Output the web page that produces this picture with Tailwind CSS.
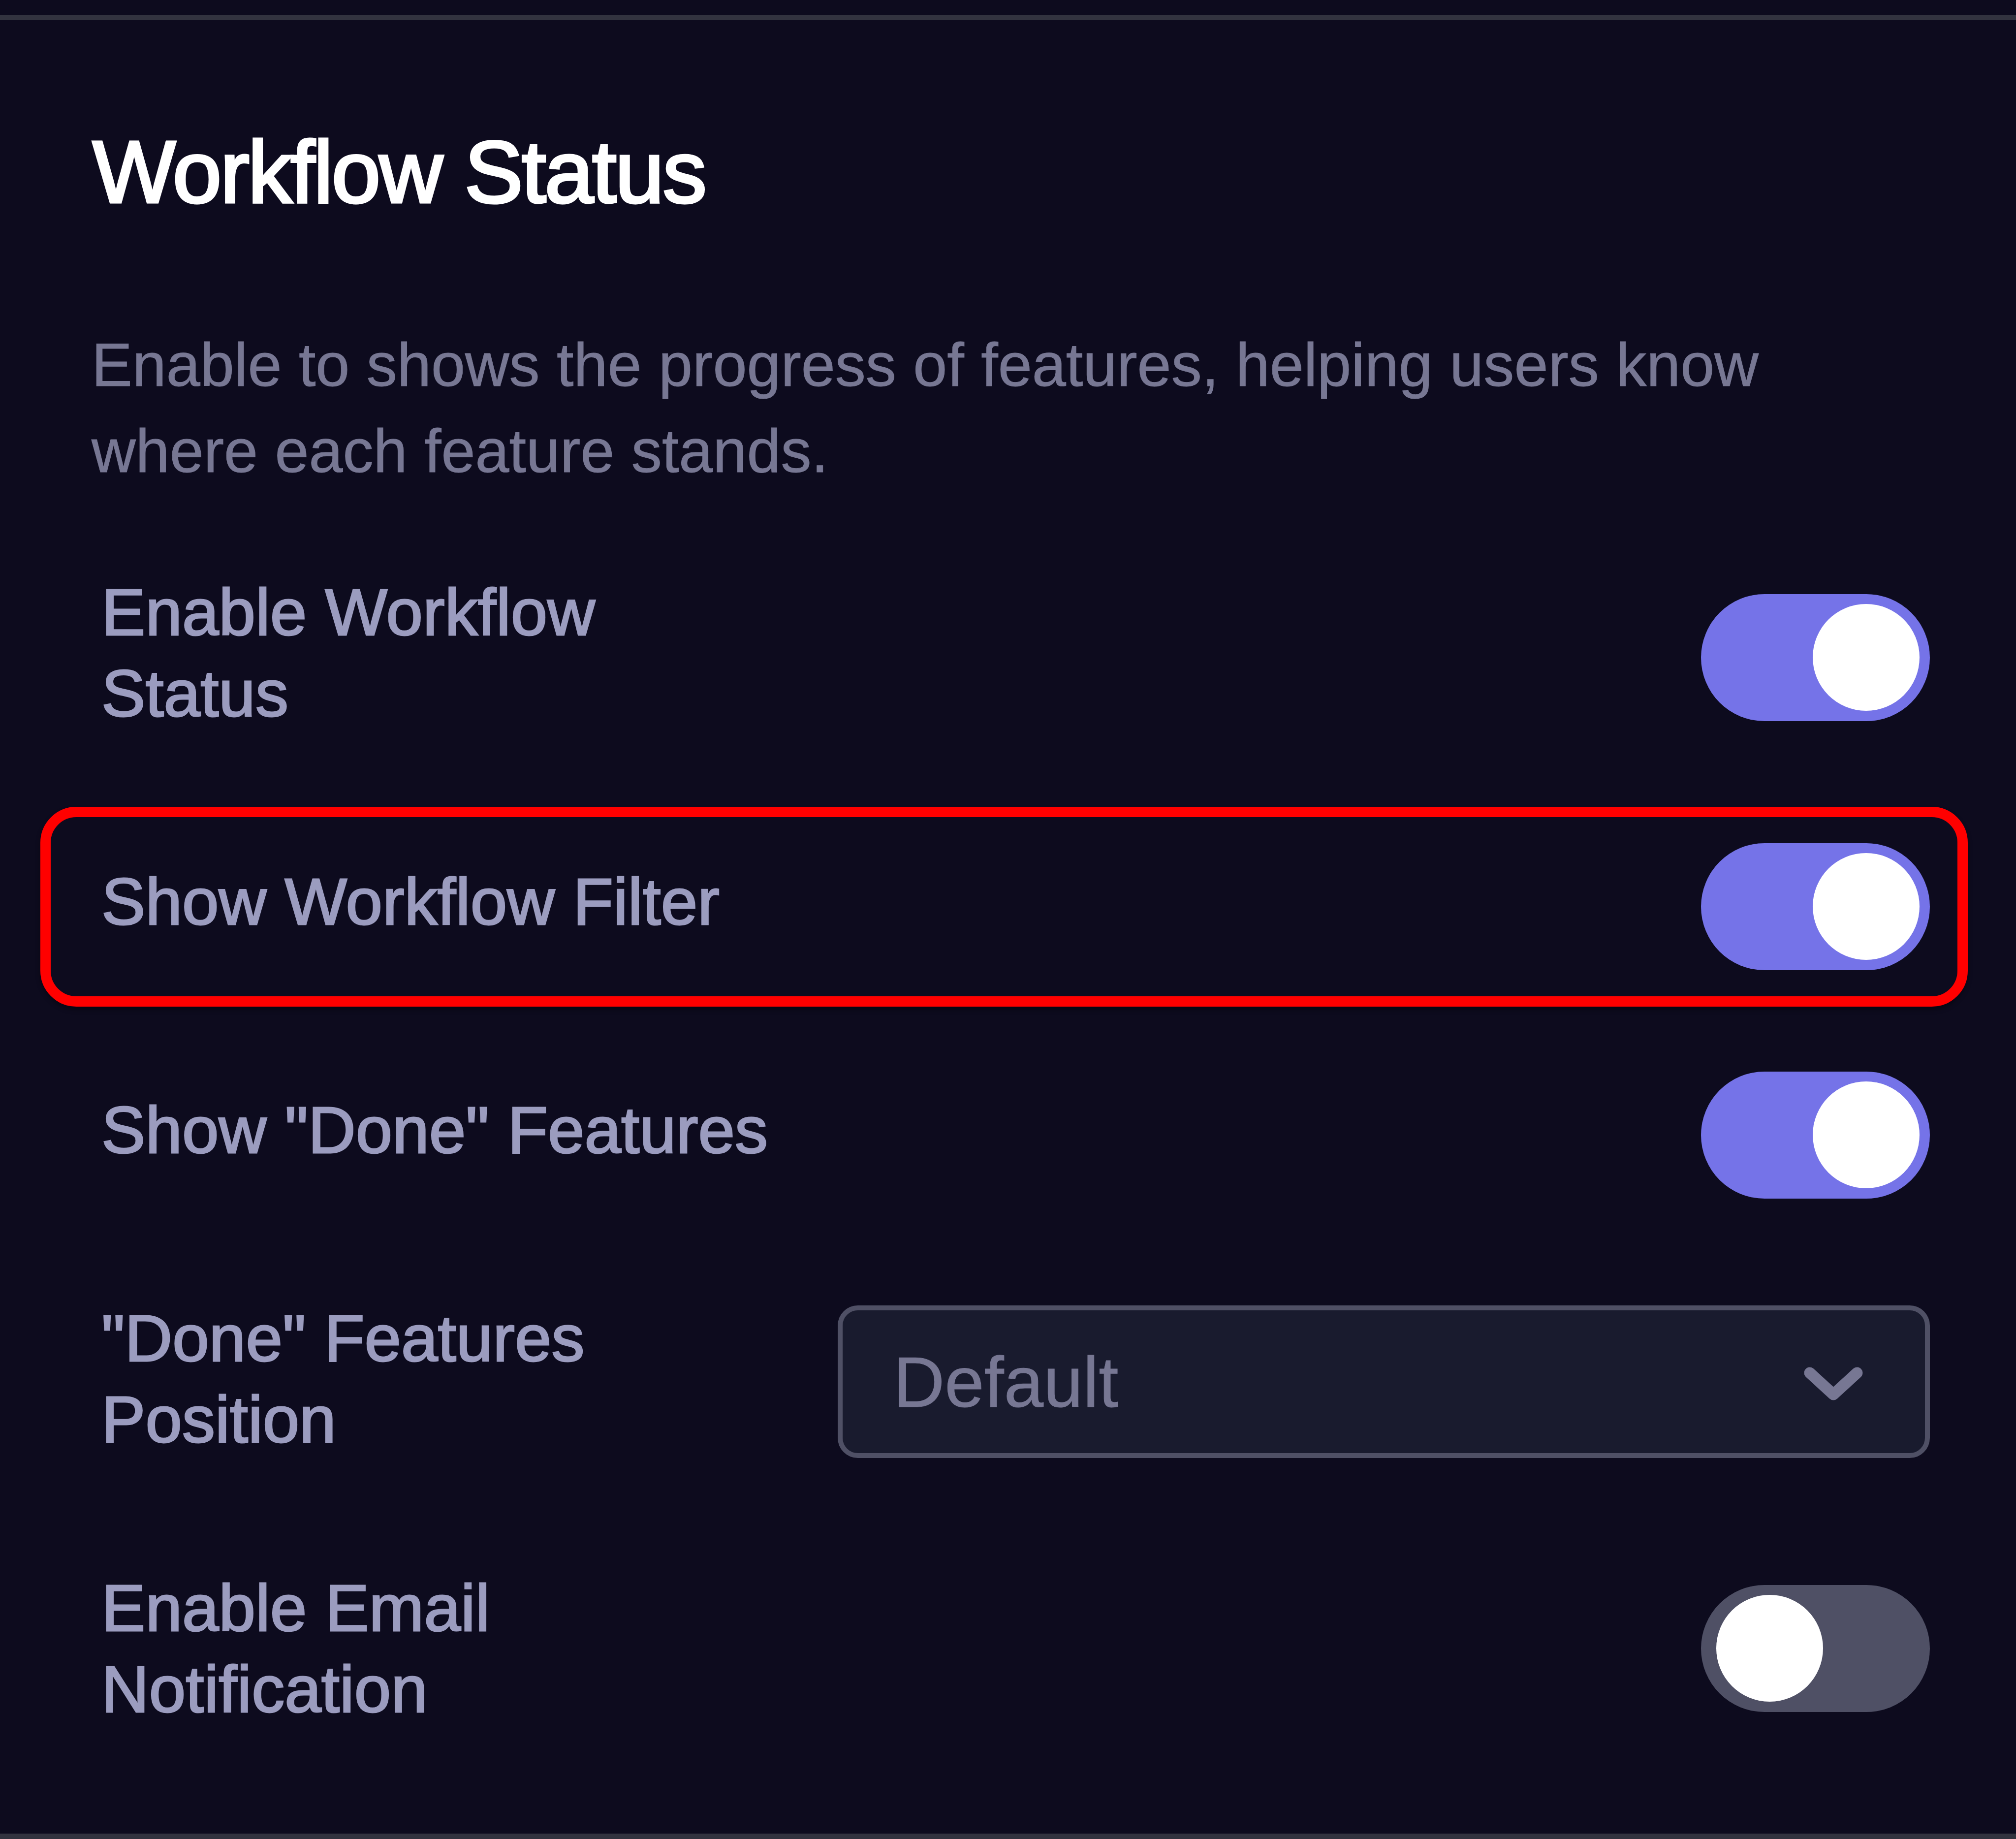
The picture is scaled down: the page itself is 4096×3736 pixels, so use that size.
<!DOCTYPE html>
<html lang="en">
<head>
  <meta charset="UTF-8" />
  <meta name="viewport" content="width=device-width, initial-scale=1.0" />
  <title>Workflow Status</title>
  <script src="https://cdn.jsdelivr.net/npm/@tailwindcss/browser@4"></script>
  <style>
    body {
      background: #0d0b1e;
      font-family: "Liberation Sans", Arial, Helvetica, sans-serif;
    }
    h2 { -webkit-text-stroke: 5px currentColor; }
    p, .value { -webkit-text-stroke: 1px currentColor; }
    .label { -webkit-text-stroke: 3px currentColor; }
  </style>
</head>
<body class="w-[4096px] h-[3736px] overflow-hidden">

  <!-- Settings section -->
  <section class="flex flex-col mt-[31px] h-[3705px] border-t-[10px] border-b-[11px] border-[#32333f]">

    <h2 class="mt-[198px] ml-[188px] text-[179px] leading-[220px] tracking-[-3px] text-white">Workflow Status</h2>

    <p class="mt-[195px] ml-[186px] text-[124.1px] leading-[175.4px] text-[#777793]">
      Enable to shows the progress of features, helping users know<br />where each feature stands.
    </p>

    <!-- Enable Workflow Status -->
    <div class="mt-[156px] h-[350px] pl-[206px] pr-[175px] flex items-center justify-between">
      <div class="label pb-5 text-[134px] leading-[165px] text-[#9b9cbf]">Enable Workflow<br />Status</div>
      <button class="w-[465px] h-[258px] pr-[21px] rounded-full bg-[#7573e8] flex items-center justify-end"><span class="size-[217px] rounded-full bg-white"></span></button>
    </div>

    <!-- Show Workflow Filter (highlighted) -->
    <div class="mt-[128px] ml-[82px] w-[3916px] h-[406px] pl-[103px] pr-[56px] border-[21px] border-[#ff0000] rounded-[73px] shadow-[0_6px_10px_rgba(0,0,0,0.35)] flex items-center justify-between">
      <div class="label pb-5 text-[134px] leading-[165px] text-[#9b9cbf]">Show Workflow Filter</div>
      <button class="w-[465px] h-[258px] pr-[21px] rounded-full bg-[#7573e8] flex items-center justify-end"><span class="size-[217px] rounded-full bg-white"></span></button>
    </div>

    <!-- Show "Done" Features -->
    <div class="mt-[132px] h-[258px] pl-[206px] pr-[175px] flex items-center justify-between">
      <div class="label pb-5 text-[134px] leading-[165px] text-[#9b9cbf]">Show "Done" Features</div>
      <button class="w-[465px] h-[258px] pr-[21px] rounded-full bg-[#7573e8] flex items-center justify-end"><span class="size-[217px] rounded-full bg-white"></span></button>
    </div>

    <!-- "Done" Features Position -->
    <div class="mt-[197px] h-[350px] pl-[206px] pr-[175px] flex items-center justify-between">
      <div class="label pb-[12px] text-[134px] leading-[165px] text-[#9b9cbf]">"Done" Features<br />Position</div>
      <button class="w-[2219px] h-[310px] pl-[103px] pr-[124px] border-[10px] border-[#4f5065] rounded-[41px] bg-[#191b2e] flex items-center justify-between text-[144.4px] leading-[165px] text-[#777793]">
        <span class="value pt-1">Default</span>
        <svg class="w-[124px] h-[73px] mt-[10px]" viewBox="0 0 124 73" fill="none" stroke="currentColor" stroke-width="23" stroke-linecap="round" stroke-linejoin="round"><path d="M14 14 L62 58 L110 14" /></svg>
      </button>
    </div>

    <!-- Enable Email Notification -->
    <div class="mt-[192px] h-[350px] pl-[206px] pr-[175px] flex items-center justify-between">
      <div class="label text-[134px] leading-[165px] text-[#9b9cbf]">Enable Email<br />Notification</div>
      <button class="w-[465px] h-[258px] pl-[31px] rounded-full bg-[#4f5065] flex items-center"><span class="size-[217px] rounded-full bg-white"></span></button>
    </div>

  </section>
</body>
</html>
